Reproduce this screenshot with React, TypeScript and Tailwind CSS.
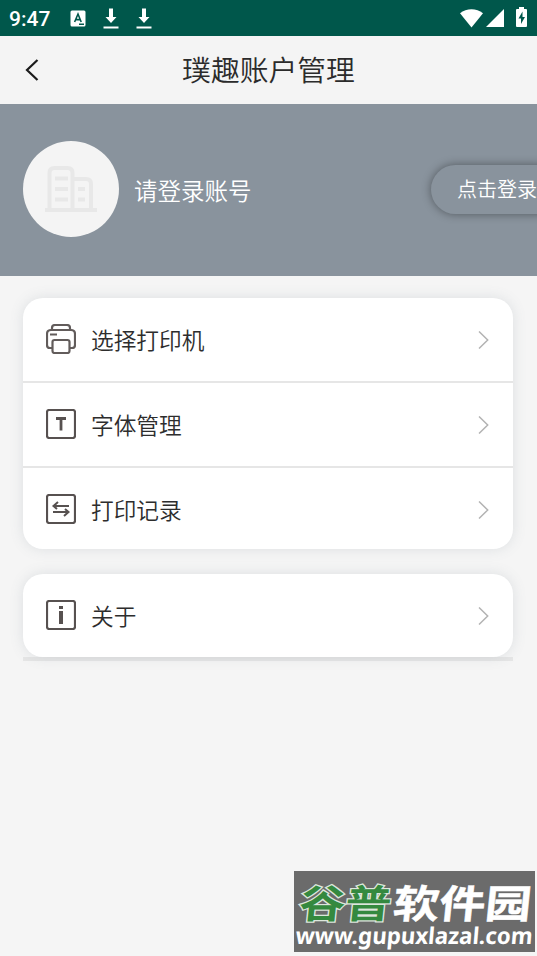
import type { ReactNode } from "react";

interface MenuRowProps {
  icon: ReactNode;
  label: string;
}

const StatusBar = () => (
  <div className="flex h-9 items-center justify-between bg-[#00574b] pr-[10px] pl-[9px] text-white">
    <div className="flex items-center">
      <span className="w-[61px] pt-px font-['Roboto',sans-serif] text-[21px] leading-9 font-medium">
        9:47
      </span>
      <svg width="16" height="17" viewBox="0 0 16 17">
        <rect x="0.5" y="0.5" width="15" height="16" rx="1.5" fill="#fff" />
        <path
          d="M4.6 12 8 4l3.2 8M6 9.6h4M9 14.2h5"
          fill="none"
          stroke="#00574b"
          strokeWidth="1.6"
        />
      </svg>
      <DownloadIcon className="ml-[17px]" />
      <DownloadIcon className="ml-[17px]" />
    </div>
    <div className="flex items-center">
      <svg width="23" height="19" viewBox="0 0 23 19">
        <path d="M0 4.2C6.5-1 16.5-1 23 4.2L11.5 18.5Z" fill="#fff" />
      </svg>
      <svg className="ml-[3px]" width="18" height="18" viewBox="0 0 18 18">
        <path d="M18 0v18H0Z" fill="#fff" />
      </svg>
      <svg className="-mt-0.5 ml-3" width="11" height="20" viewBox="0 0 11 20">
        <path
          d="M3 0h5v2h2a1 1 0 0 1 1 1v16a1 1 0 0 1-1 1H1a1 1 0 0 1-1-1V3a1 1 0 0 1 1-1h2Z"
          fill="#fff"
        />
        <path d="M6.5 4.5 2.5 11.5H5V17l4-7H6.5Z" fill="#00574b" />
      </svg>
    </div>
  </div>
);

const DownloadIcon = ({ className }: { className: string }) => (
  <svg className={className} width="16" height="21" viewBox="0 0 16 21">
    <path d="M6 0.5h4V9h3.5L8 15 2.5 9H6Z" fill="#fff" />
    <path d="M0.5 19.5h15" stroke="#fff" strokeWidth="2" />
  </svg>
);

const BuildingIcon = () => (
  <svg width="54" height="48" viewBox="0 0 54 48" fill="none" stroke="#e8e8e8" strokeWidth="4">
    <path d="M5.5 44V8q0-5 5-5h13q5 0 5 5v36M28.5 14H42q5 0 5 5v25M1 45h52" />
    <path d="M11 13.5h13M11 24h13M11 34.5h13M34 24h7M34 34.5h7" />
  </svg>
);

const PrinterIcon = () => (
  <svg
    className="mb-px"
    width="30"
    height="30"
    viewBox="0 0 30 30"
    fill="none"
    stroke="#625c5b"
    strokeWidth="2.2"
  >
    <path d="M6 6V4q0-3 3-3h12q3 0 3 3v2" />
    <path d="M6 24H4q-3 0-3-3V10q0-4 4-4h20q4 0 4 4v11q0 3-3 3h-2" />
    <path d="M4 10.5h7" />
    <path d="M8.5 16h13q2 0 2 2v9q0 2-2 2h-13q-2 0-2-2v-9q0-2 2-2Z" />
  </svg>
);

const BoxedIcon = ({ children }: { children: ReactNode }) => (
  <svg
    className="mb-px"
    width="30"
    height="30"
    viewBox="0 0 30 30"
    fill="none"
    stroke="#575150"
    strokeWidth="2.2"
  >
    <rect x="1" y="1" width="28" height="28" rx="2.2" />
    {children}
  </svg>
);

const MenuRow = ({ icon, label }: MenuRowProps) => (
  <div className="box-content flex h-[83px] items-center pr-6 pl-[23px]">
    {icon}
    <span className="ml-[15px] flex-1 text-[22.7px] leading-8 font-[350] text-[#2d2d2d]">
      {label}
    </span>
    <svg width="11" height="18" viewBox="0 0 11 18" fill="none">
      <path d="M1 0.5 9.7 9 1 17.5" stroke="#b3b3b3" strokeWidth="1.5" />
    </svg>
  </div>
);

const Watermark = () => (
  <div className="absolute top-[871px] left-[294px] h-[81px] w-[241px] bg-[#6b6b6b]">
    <svg className="overflow-visible" width="241" height="81" viewBox="0 0 241 81">
      <g
        transform="translate(4 47) skewX(-6)"
        fontFamily="'Noto Sans CJK SC', sans-serif"
        fontSize="39"
        fontWeight="700"
      >
        <text
          textLength="92"
          lengthAdjust="spacingAndGlyphs"
          fill="#34893f"
          stroke="#dce6dc"
          strokeWidth="2.5"
          paintOrder="stroke"
        >
          谷普
        </text>
        <text
          x="94"
          textLength="138"
          lengthAdjust="spacingAndGlyphs"
          fill="#fff"
          stroke="#fff"
          strokeWidth="0.5"
        >
          软件园
        </text>
      </g>
      <text
        transform="translate(1 73) skewX(-5)"
        textLength="237"
        lengthAdjust="spacingAndGlyphs"
        fontFamily="'Noto Sans', 'Open Sans', sans-serif"
        fontSize="23"
        fontWeight="700"
        fill="#fff"
      >
        www.gupuxlazal.com
      </text>
    </svg>
  </div>
);

export default function App() {
  return (
    <div className="relative h-[956px] w-full overflow-hidden bg-[#f5f5f5] font-['Noto_Sans_CJK_SC',sans-serif]">
      <StatusBar />

      <header className="flex h-[68px] items-center bg-[#f4f4f4] pl-[25px]">
        <svg width="14" height="22" viewBox="0 0 14 22" fill="none">
          <path d="M12.5 1 2 11l10.5 10" stroke="#1b1b1b" strokeWidth="2.2" />
        </svg>
        <h1 className="flex-1 pr-[39px] pb-0.5 text-center text-[28.8px] leading-10 font-[350] text-[#2b2b2b]">
          璞趣账户管理
        </h1>
      </header>

      {/* Account banner */}
      <section className="flex h-[172px] items-center bg-[#89939d] pb-0.5 pl-[23px] text-white">
        <div className="flex size-24 items-center justify-center rounded-full bg-[#f4f4f4]">
          <BuildingIcon />
        </div>
        <span className="ml-[15px] flex-1 pt-0.5 text-[23.5px] leading-9 font-[350]">
          请登录账号
        </span>
        <button className="-mr-6 h-[49px] w-[130px] rounded-full bg-[#89939d] pl-0.5 text-center text-[20px] font-[350] whitespace-nowrap shadow-[0_0_10px_rgba(0,0,0,0.4)]">
          点击登录
        </button>
      </section>

      <main className="flex flex-col gap-[25px] pt-[22px] pr-6 pl-[23px]">
        <div className="h-[251px] divide-y-2 divide-[#e6e6e6] overflow-hidden rounded-[20px] bg-white shadow-[0_0_14px_rgba(100,120,130,0.16)]">
          <MenuRow icon={<PrinterIcon />} label="选择打印机" />
          <MenuRow
            icon={
              <BoxedIcon>
                <path d="M10 9.5h10M15 9.5v12" strokeWidth="2.8" />
              </BoxedIcon>
            }
            label="字体管理"
          />
          <MenuRow
            icon={
              <BoxedIcon>
                <path d="M23 12H8M12 8l-4.5 4 3.5 3M7 18h15M18 22l4.500-4-3.500-3" strokeWidth="2" />
              </BoxedIcon>
            }
            label="打印记录"
          />
        </div>

        <div className="border-b-4 border-[#e6e6e6]">
          <div className="rounded-[20px] bg-white shadow-[0_0_14px_rgba(100,120,130,0.16)]">
            <MenuRow
              icon={
                <BoxedIcon>
                  <path d="M15 6v3M15 11v13" strokeWidth="4" />
                </BoxedIcon>
              }
              label="关于"
            />
          </div>
        </div>
      </main>

      <Watermark />
    </div>
  );
}
